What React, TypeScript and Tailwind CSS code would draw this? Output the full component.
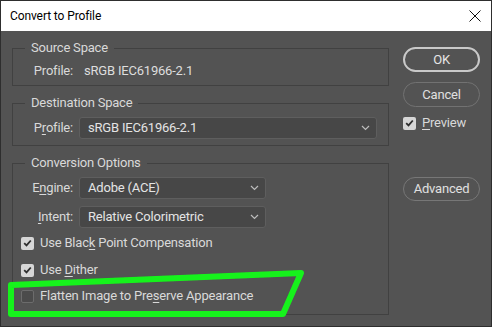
import * as React from "react"

function Chevron() {
  return (
    <svg width="9" height="6" viewBox="0 0 9 6" className="shrink-0">
      <path d="M1 1l3.5 3.5L8 1" fill="none" stroke="#bdbdbd" strokeWidth="1.2" />
    </svg>
  )
}

function Dropdown({ value, width }: { value: string; width: string }) {
  return (
    <div
      className={`${width} h-[22px] flex items-center justify-between pl-[8px] pr-[6px] rounded-[3px] border border-[#5e5e5e] bg-[#474747] text-[#e4e4e4]`}
    >
      <span>{value}</span>
      <Chevron />
    </div>
  )
}

function Checkbox({ checked }: { checked: boolean }) {
  if (checked) {
    return (
      <span className="w-[13px] h-[13px] shrink-0 rounded-[2px] bg-[#d6d6d6] flex items-center justify-center">
        <svg width="9" height="8" viewBox="0 0 9 8">
          <path d="M1.2 4.2l2.3 2.2L7.8 1.5" fill="none" stroke="#2e2e2e" strokeWidth="1.8" />
        </svg>
      </span>
    )
  }
  return <span className="w-[13px] h-[13px] shrink-0 rounded-[2px] border border-[#6c6c6c] bg-[#4b4b4b]" />
}

function Group({ title, children, className = "" }: { title: string; children: React.ReactNode; className?: string }) {
  return (
    <fieldset className={`border border-[#414141] px-0 pt-0 ${className}`}>
      <legend className="ml-[12px] px-[6px] leading-[18px] text-[#d9d9d9]">{title}</legend>
      {children}
    </fieldset>
  )
}

export default function App() {
  return (
    <div className="relative w-[492px] h-[327px] font-['Roboto',sans-serif] text-[13px] tracking-[-0.2px]">
      <div className="w-full h-full border border-[#2e2e2e] bg-[#535353] flex flex-col text-[#d9d9d9]">
        <div className="h-[30px] shrink-0 bg-white flex items-center justify-between pl-[9px] pr-[10px] text-black text-[12px] tracking-[-0.1px]">
          <span>Convert to Profile</span>
          <svg width="12" height="12" viewBox="0 0 12 12">
            <path d="M0.5 0.5l11 11M11.5 0.5l-11 11" stroke="#111" strokeWidth="1" />
          </svg>
        </div>

        <div className="flex pl-[11px] pt-[8px] gap-[14px]">
          <div className="w-[377px] flex flex-col">
            <Group title="Source Space">
              <div className="mt-[5px] mb-[5px] h-[18px] flex items-center">
                <span className="w-[60px] text-right">Profile:</span>
                <span className="ml-[11px] text-[#dedede]">sRGB IEC61966-2.1</span>
              </div>
            </Group>

            <Group title="Destination Space" className="mt-[8px]">
              <div className="mt-[5px] mb-[6px] flex items-center gap-[6px]">
                <span className="w-[60px] text-right">
                  P<span className="underline underline-offset-2">r</span>ofile:
                </span>
                <Dropdown value="sRGB IEC61966-2.1" width="w-[298px]" />
              </div>
            </Group>

            <Group title="Conversion Options" className="mt-[8px]">
              <div className="mt-[5px] flex items-center gap-[6px]">
                <span className="w-[60px] text-right">
                  E<span className="underline underline-offset-2">n</span>gine:
                </span>
                <Dropdown value="Adobe (ACE)" width="w-[187px]" />
              </div>
              <div className="mt-[7px] flex items-center gap-[6px]">
                <span className="w-[60px] text-right">
                  <span className="underline underline-offset-2">I</span>ntent:
                </span>
                <Dropdown value="Relative Colorimetric" width="w-[187px]" />
              </div>
              <div className="mt-[6px] ml-[8px] h-[18px] flex items-center gap-[6px]">
                <Checkbox checked />
                <span>
                  Use Blac<span className="underline underline-offset-2">k</span> Point Compensation
                </span>
              </div>
              <div className="mt-[9px] ml-[8px] h-[18px] flex items-center gap-[6px]">
                <Checkbox checked />
                <span>
                  Use <span className="underline underline-offset-2">D</span>ither
                </span>
              </div>
              <div className="mt-[8px] mb-[9px] ml-[8px] h-[18px] flex items-center gap-[6px]">
                <Checkbox checked={false} />
                <span>
                  Flatten Image to Pre<span className="underline underline-offset-2">s</span>erve Appearance
                </span>
              </div>
            </Group>
          </div>

          <div className="w-[77px] flex flex-col">
            <button className="mt-[8px] h-[25px] rounded-full border-2 border-[#c9c9c9] text-[#e6e6e6]">OK</button>
            <button className="mt-[10px] h-[25px] rounded-full border border-[#727272] text-[#e0e0e0]">Cancel</button>
            <div className="mt-[8px] h-[16px] flex items-center gap-[6px]">
              <Checkbox checked />
              <span>
                <span className="underline underline-offset-2">P</span>review
              </span>
            </div>
            <button className="mt-[46px] h-[24px] rounded-full border border-[#777777] text-[#e0e0e0]">Advanced</button>
          </div>
        </div>
      </div>

      <svg className="absolute left-0 top-0 pointer-events-none" width="492" height="327" viewBox="0 0 492 327">
        <filter id="soft">
          <feGaussianBlur stdDeviation="0.6" />
        </filter>
        <path
          d="M11 285 L301 273 L283 314 L11 314 Z"
          fill="none"
          stroke="#17f21c"
          strokeWidth="6"
          strokeLinejoin="round"
          filter="url(#soft)"
        />
      </svg>
    </div>
  )
}
